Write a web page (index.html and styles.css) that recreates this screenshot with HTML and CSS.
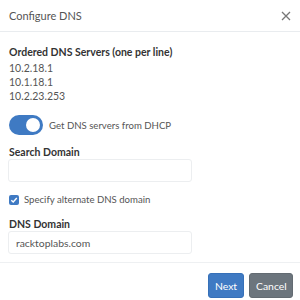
FILE: index.html
```html
<!DOCTYPE html>
<html lang="en">
  <head>
    <meta charset="UTF-8" />
    <meta name="viewport" content="width=device-width, initial-scale=1.0" />
    <title>Configure DNS</title>
    <link rel="stylesheet" href="styles.css">
  </head>
  <body>
    <div class="modal">
      <div class="modal-header">
        <span class="modal-title">Configure DNS</span>
        <button type="button" class="close-btn" aria-label="Close">
          <svg width="10" height="10" viewBox="0 0 10 10">
            <path d="M1 1 L9 9 M9 1 L1 9" stroke="#777" stroke-width="1.3" fill="none" />
          </svg>
        </button>
      </div>

      <div class="modal-body">
        <div class="form-group">
          <label class="field-label">Ordered DNS Servers (one per line)</label>
          <div class="server-list">
            <div>10.2.18.1</div>
            <div>10.1.18.1</div>
            <div>10.2.23.253</div>
          </div>
        </div>

        <div class="toggle-row">
          <span class="toggle"><span class="knob"></span></span>
          <span>Get DNS servers from DHCP</span>
        </div>

        <div class="form-group">
          <label class="field-label" for="search-domain">Search Domain</label>
          <input type="text" id="search-domain" class="text-input" />
        </div>

        <div class="check-row">
          <span class="checkbox">
            <svg width="8" height="8" viewBox="0 0 8 8">
              <path d="M1.3 4.2 L3.2 6 L6.8 2" stroke="#fff" stroke-width="1.4" fill="none" />
            </svg>
          </span>
          <span>Specify alternate DNS domain</span>
        </div>

        <div class="form-group">
          <label class="field-label" for="dns-domain">DNS Domain</label>
          <input type="text" id="dns-domain" class="text-input" value="racktoplabs.com" />
        </div>
      </div>

      <div class="modal-footer">
        <button type="button" class="btn btn-primary">Next</button>
        <button type="button" class="btn btn-secondary">Cancel</button>
      </div>
    </div>
  </body>
</html>
```

FILE: styles.css
```css
body {
  font-family: Lato, "Open Sans", sans-serif;
  margin: 0;
  color: #444;
  background: #fff;
}
.modal {
  width: 300px;
  height: 300px;
  overflow: hidden;
}
.modal-header {
  display: flex;
  align-items: center;
  justify-content: space-between;
  height: 31px;
  padding: 0 8px 0 9px;
  border-bottom: 1px solid #e9ecef;
}
.modal-title {
  font-size: 11px;
  color: #555;
}
.close-btn {
  background: none;
  border: none;
  padding: 0;
  width: 12px;
  height: 12px;
  display: flex;
  align-items: center;
  justify-content: center;
}
.modal-body {
  padding: 13px 8px 0 9px;
  height: 217px;
  border-bottom: 1px solid #eef0f2;
}
.field-label {
  display: block;
  font-size: 10.5px;
  font-weight: bold;
  color: #333;
  line-height: 14px;
}
.server-list {
  margin-top: 2px;
  font-size: 10.5px;
  line-height: 14px;
  color: #555;
}
.toggle-row {
  display: flex;
  align-items: center;
  gap: 6px;
  margin-top: 12px;
  font-size: 9.6px;
  color: #555;
}
.toggle {
  width: 34px;
  height: 20px;
  border-radius: 10px;
  background: #3f7ac3;
  position: relative;
  flex: none;
}
.knob {
  position: absolute;
  right: 3px;
  top: 3px;
  width: 14px;
  height: 14px;
  border-radius: 50%;
  background: #fff;
}
.toggle-row + .form-group {
  margin-top: 10px;
}
.text-input {
  display: block;
  box-sizing: border-box;
  width: 184px;
  height: 23px;
  margin: 0 0 0 -1px;
  padding: 0 7px;
  border: 1px solid #eceef0;
  border-radius: 3px;
  font-family: inherit;
  font-size: 10.4px;
  color: #555;
}
.check-row {
  display: flex;
  align-items: center;
  gap: 5px;
  margin-top: 12px;
  font-size: 9.6px;
  color: #555;
}
.checkbox {
  width: 10px;
  height: 10px;
  border-radius: 2px;
  background: #3f7ac3;
  display: flex;
  align-items: center;
  justify-content: center;
}
.check-row + .form-group {
  margin-top: 12px;
}
.modal-footer {
  display: flex;
  justify-content: flex-end;
  gap: 5px;
  padding: 10px 7px 0 0;
}
.btn {
  height: 25px;
  padding: 0 6px;
  border: 1px solid transparent;
  border-radius: 3px;
  color: #fff;
  font-family: inherit;
  font-size: 10.4px;
}
.btn-primary {
  background: #3f7ac3;
  border-color: #3670b8;
  width: 36px;
}
.btn-secondary {
  background: #6c757d;
  border-color: #636b72;
  width: 44px;
}
```
